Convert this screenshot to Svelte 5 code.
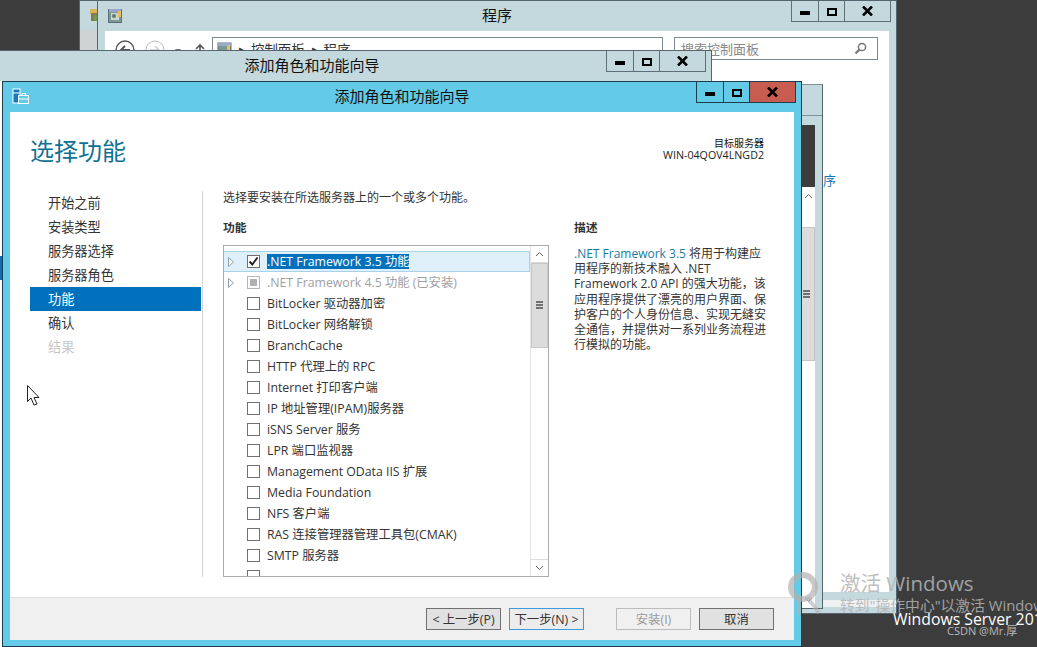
<script>
  const steps = [
    { label: "开始之前" },
    { label: "安装类型" },
    { label: "服务器选择" },
    { label: "服务器角色" },
    { label: "功能", active: true },
    { label: "确认" },
    { label: "结果", disabled: true }
  ];

  const features = [
    { label: ".NET Framework 3.5 功能", checked: true, tree: true, selected: true },
    { label: ".NET Framework 4.5 功能 (已安装)", partial: true, tree: true, muted: true },
    { label: "BitLocker 驱动器加密" },
    { label: "BitLocker 网络解锁" },
    { label: "BranchCache" },
    { label: "HTTP 代理上的 RPC" },
    { label: "Internet 打印客户端" },
    { label: "IP 地址管理(IPAM)服务器" },
    { label: "iSNS Server 服务" },
    { label: "LPR 端口监视器" },
    { label: "Management OData IIS 扩展" },
    { label: "Media Foundation" },
    { label: "NFS 客户端" },
    { label: "RAS 连接管理器管理工具包(CMAK)" },
    { label: "SMTP 服务器" },
    { label: "" }
  ];
</script>

{#snippet caption(danger)}
  <div class="caption">
    <span class="cap-btn cap-min"><i class="min-bar"></i></span>
    <span class="cap-btn cap-max"><i class="max-box"></i></span>
    <span class="cap-btn cap-close" class:danger>
      <svg width="13" height="10" viewBox="0 0 13 10"><path d="M2 0.5 L11 9.5 M11 0.5 L2 9.5" stroke="#000" stroke-width="2.6" fill="none" /></svg>
    </span>
  </div>
{/snippet}

<div class="desktop">
  <!-- window furthest back, only its left edge shows -->
  <div class="win back-edge">
    <svg class="edge-icon" width="9" height="14" viewBox="0 0 9 14">
      <rect x="1" y="1" width="8" height="5" fill="#d8b45a" />
      <rect x="2" y="5" width="7" height="8" fill="#8a7a4a" />
      <rect x="5" y="7" width="4" height="6" fill="#6f9a5a" />
    </svg>
    <div class="edge-body"></div>
  </div>

  <!-- 程序 -->
  <div class="win programs">
    <div class="titlebar inactive">
      <svg class="title-icon" width="16" height="16" viewBox="0 0 16 16">
        <rect x="1.5" y="1.5" width="13" height="13" fill="#7d9a92" stroke="#5d6f7a" />
        <rect x="2" y="1" width="12" height="3" fill="#9aa7c9" />
        <rect x="4" y="5" width="8" height="7" fill="#cfd6d2" />
        <circle cx="7" cy="8" r="2" fill="#5c7a66" />
        <rect x="11" y="3" width="3" height="6" fill="#e0c060" />
      </svg>
      <span class="title-text">程序</span>
      {@render caption(false)}
    </div>
    <div class="programs-body">
      <div class="toolbar">
        <svg width="94" height="22" viewBox="0 0 94 22">
          <circle cx="10" cy="11" r="9" fill="none" stroke="#555" stroke-width="1.4" />
          <path d="M15 11 H6 M10 7 L6 11 L10 15" fill="none" stroke="#555" stroke-width="2" />
          <circle cx="40" cy="11" r="9" fill="none" stroke="#bbb" />
          <path d="M35 11 H44 M40 7 L44 11 L40 15" fill="none" stroke="#ccc" stroke-width="1.5" />
          <path d="M60 10 L66 10 L63 14 Z" fill="#777" />
          <path d="M85 16 V6 M81 10 L85 6 L89 10" fill="none" stroke="#555" stroke-width="1.6" />
        </svg>
        <div class="address">
          <svg width="15" height="15" viewBox="0 0 15 15">
            <rect x="1" y="1" width="13" height="13" fill="#7d9a92" stroke="#5d6f7a" />
            <rect x="1" y="1" width="13" height="3" fill="#9aa7c9" />
            <rect x="10" y="3" width="3" height="6" fill="#e0c060" />
          </svg>
          <span class="crumb">▸</span><span>控制面板</span><span class="crumb">▸</span><span>程序</span>
        </div>
        <div class="search">
          <span>搜索控制面板</span>
          <svg width="13" height="13" viewBox="0 0 13 13">
            <circle cx="8" cy="5" r="3.6" fill="none" stroke="#777" stroke-width="1.5" />
            <path d="M5.4 7.6 L1.5 11.5" stroke="#777" stroke-width="2.2" />
          </svg>
        </div>
      </div>
      <span class="stray-link">序</span>
    </div>
    <div class="programs-status"></div>
  </div>

  <!-- window peeking out to the right of the dialog -->
  <div class="win peek">
    <div class="titlebar inactive peek-title">{@render caption(false)}</div>
    <div class="peek-body">
      <div class="peek-dark"></div>
      <div class="peek-scroll">
        <span class="peek-up">
          <svg width="9" height="6" viewBox="0 0 9 6"><path d="M1 5 L4.5 1.5 L8 5" fill="none" stroke="#666" /></svg>
        </span>
        <span class="peek-track"></span>
        <span class="peek-thumb"><i class="grip"></i></span>
        <span class="peek-rest"></span>
        <span class="peek-down">
          <svg width="9" height="6" viewBox="0 0 9 6"><path d="M1 1 L4.5 4.5 L8 1" fill="none" stroke="#666" /></svg>
        </span>
      </div>
    </div>
  </div>

  <!-- inactive copy of the wizard -->
  <div class="win wizard-back">
    <div class="titlebar inactive">
      <span></span>
      <span class="title-text">添加角色和功能向导</span>
      {@render caption(false)}
    </div>
    <div class="wizard-back-body">
      <span class="back-active"></span>
    </div>
  </div>

  <!-- active wizard -->
  <div class="win wizard">
    <div class="titlebar">
      <svg class="title-icon wizard-icon" width="17" height="16" viewBox="0 0 17 16">
        <rect x="0.5" y="0.5" width="8" height="15" fill="#fff" />
        <rect x="1.5" y="1.5" width="6" height="3" fill="#1a78b8" />
        <rect x="1.5" y="5.5" width="6" height="9" fill="#1a78b8" />
        <rect x="6.5" y="7.5" width="10" height="8" fill="#62cbe8" stroke="#fff" />
        <path d="M10 7.5 V5.5 H13.5 V7.5 M7 11 H16.5" fill="none" stroke="#fff" />
      </svg>
      <span class="title-text">添加角色和功能向导</span>
      {@render caption(true)}
    </div>

    <div class="wizard-body">
      <header class="head">
        <h1>选择功能</h1>
        <div class="target">
          <strong>目标服务器</strong>
          <span>WIN-04QOV4LNGD2</span>
        </div>
      </header>

      <div class="middle">
        <nav class="steps">
          {#each steps as step}
            <div class="step" class:active={step.active} class:disabled={step.disabled}>{step.label}</div>
          {/each}
        </nav>

        <section class="pane">
          <p class="intro">选择要安装在所选服务器上的一个或多个功能。</p>
          <div class="columns">
            <div class="features">
              <h2>功能</h2>
              <div class="listbox">
                <div class="rows">
                  {#each features as item}
                    <div class="row" class:selected={item.selected} class:muted={item.muted}>
                      <span class="tree">
                        {#if item.tree}
                          <svg width="6" height="10" viewBox="0 0 6 10"><path d="M0.5 0.5 L5.5 5 L0.5 9.5 Z" fill="#fff" stroke="#8fa0ad" /></svg>
                        {/if}
                      </span>
                      <span class="check" class:partial={item.partial}>
                        {#if item.checked}
                          <svg width="11" height="11" viewBox="0 0 11 11"><path d="M1.5 5.5 L4.3 8.5 L9.5 1.5" fill="none" stroke="#222" stroke-width="1.9" /></svg>
                        {/if}
                        {#if item.partial}<i></i>{/if}
                      </span>
                      <span class="label">{item.label}</span>
                    </div>
                  {/each}
                </div>
                <div class="scrollbar">
                  <span class="sb-btn">
                    <svg width="9" height="6" viewBox="0 0 9 6"><path d="M1 5 L4.5 1.5 L8 5" fill="none" stroke="#606060" /></svg>
                  </span>
                  <span class="sb-thumb"><i class="grip"></i></span>
                  <span class="sb-track"></span>
                  <span class="sb-btn sb-down">
                    <svg width="9" height="6" viewBox="0 0 9 6"><path d="M1 1 L4.5 4.5 L8 1" fill="none" stroke="#606060" /></svg>
                  </span>
                </div>
              </div>
            </div>

            <aside class="desc">
              <h2>描述</h2>
              <p>
                <span class="link">.NET Framework 3.5</span> 将用于构建应<br />
                用程序的新技术融入 .NET<br />
                Framework 2.0 API 的强大功能，该<br />
                应用程序提供了漂亮的用户界面、保<br />
                护客户的个人身份信息、实现无缝安<br />
                全通信，并提供对一系列业务流程进<br />
                行模拟的功能。
              </p>
            </aside>
          </div>
        </section>
      </div>

      <footer class="foot">
        <button class="btn">&lt; 上一步(P)</button>
        <button class="btn primary">下一步(N) &gt;</button>
        <button class="btn off">安装(I)</button>
        <button class="btn">取消</button>
      </footer>
    </div>
  </div>

  <!-- activation watermark and overlays -->
  <svg class="wm-key" width="34" height="46" viewBox="0 0 34 46">
    <circle cx="16" cy="16" r="12" fill="none" stroke="#b0b0b0" stroke-width="6" opacity="0.7" />
    <path d="M12 26 V44 M20 26 L32 42" stroke="#b0b0b0" stroke-width="4" fill="none" opacity="0.6" />
  </svg>
  <div class="activate">
    <div class="wm-title">激活 Windows</div>
    <div class="wm-sub">转到"操作中心"以激活 Windows。</div>
  </div>
  <div class="edition">Windows Server 2012 R2</div>
  <div class="credit">CSDN @Mr.厚</div>

  <svg class="pointer" width="13" height="21" viewBox="0 0 13 21">
    <path d="M0.5 0.5 V16.5 L4 13 L7 20 L10 19 L7 12.5 L12 12.5 Z" fill="#fff" stroke="#222" />
  </svg>
</div>

<style>
  :global(body) {
    margin: 0;
    background: #3c3c3c;
  }

  .desktop {
    position: relative;
    width: 1037px;
    height: 647px;
    overflow: hidden;
    background: #3c3c3c;
    font-family: "Open Sans", "Noto Sans CJK SC", sans-serif;
    font-size: 12px;
    color: #333;
  }

  .win {
    position: absolute;
    box-sizing: border-box;
    border: 1px solid #566670;
    background: #c4d9de;
    display: flex;
    flex-direction: column;
  }

  .back-edge {
    left: 79px;
    top: 0;
    width: 40px;
    height: 300px;
    padding-top: 7px;
  }
  .edge-icon {
    margin-left: 9px;
  }
  .edge-body {
    margin-top: 8px;
    flex: 1;
    background: #cfd3d3;
  }

  .programs {
    left: 97px;
    top: 0;
    width: 800px;
    height: 614px;
  }
  .programs-body {
    position: relative;
    margin: 0 7px;
    height: 561px;
    background: #fff;
    flex-shrink: 0;
  }
  .programs-status {
    margin: 8px 0 0 7px;
    height: 7px;
    background: #eef1f1;
  }
  .toolbar {
    display: flex;
    align-items: flex-start;
    gap: 3px;
    padding: 6px 11px 0 10px;
  }
  .toolbar svg:first-child {
    margin-top: 2px;
  }
  .address {
    box-sizing: border-box;
    width: 451px;
    height: 23px;
    border: 1px solid #7d8a8f;
    display: flex;
    align-items: center;
    gap: 7px;
    padding-left: 4px;
    font-size: 13.4px;
    color: #333;
  }
  .crumb {
    font-size: 9px;
  }
  .search {
    box-sizing: border-box;
    width: 204px;
    height: 23px;
    margin-left: 8px;
    border: 1px solid #7d8a8f;
    display: flex;
    align-items: center;
    justify-content: space-between;
    padding: 0 10px 0 6px;
    font-size: 13px;
    color: #8a8a8a;
  }
  .stray-link {
    position: absolute;
    left: 718px;
    top: 139px;
    font-size: 13px;
    color: #1478b4;
  }

  .peek {
    left: 22px;
    top: 84px;
    width: 801px;
    height: 525px;
    border-top-color: #7f9299;
  }
  .peek-title {
    height: 21px;
    min-height: 21px;
    display: flex;
    justify-content: flex-end;
    padding-right: 6px;
    border-bottom: 1px solid #7f9299;
  }
  .peek-body {
    margin: 9px 7px 0 0;
    flex: 1;
    display: flex;
    flex-direction: column;
    background: #fff;
  }
  .peek-dark {
    height: 62px;
    background: #3c3c3c;
  }
  .peek-scroll {
    flex: 1;
    display: flex;
    flex-direction: column;
    background: #fff;
  }
  .peek-up,
  .peek-down {
    height: 17px;
    flex-shrink: 0;
    display: flex;
    align-items: center;
    justify-content: flex-end;
    padding-right: 2px;
  }
  .peek-track {
    height: 23px;
    flex-shrink: 0;
  }
  .peek-thumb {
    height: 134px;
    flex-shrink: 0;
    background: #dcdcdc;
    border: 1px solid #c4c4c4;
    display: flex;
    align-items: center;
    justify-content: flex-end;
    padding-right: 4px;
    box-sizing: border-box;
  }
  .peek-rest {
    flex: 1;
  }

  .wizard-back {
    left: -88px;
    top: 50px;
    width: 800px;
    height: 620px;
  }
  .wizard-back-body {
    margin: 0 7px;
    flex: 1;
    background: #fff;
    display: flex;
    justify-content: flex-end;
  }
  .back-active {
    width: 100%;
    height: 24px;
    margin-top: 175px;
    background: #0f6fb3;
  }

  .wizard {
    left: 2px;
    top: 81px;
    width: 800px;
    height: 566px;
    background: #63cbe8;
    border-color: #1c3e4c;
  }

  .titlebar {
    height: 30px;
    flex-shrink: 0;
    display: grid;
    grid-template-columns: 1fr auto 1fr;
    align-items: start;
    padding: 0 5px;
  }
  .title-icon {
    margin: 7px 0 0 4px;
  }
  .wizard-icon {
    margin-top: 6px;
    margin-left: 4px;
  }
  .title-text {
    margin-top: 5px;
    font-size: 15px;
    line-height: 18px;
    color: #111;
  }

  .caption {
    display: flex;
    justify-content: flex-end;
    height: 21px;
  }
  .cap-btn {
    box-sizing: border-box;
    display: flex;
    justify-content: center;
    border: 1px solid #1c3e4c;
    border-top: 0;
    margin-left: -1px;
  }
  .inactive .cap-btn {
    border-color: #5d6f78;
  }
  .cap-min {
    width: 28px;
  }
  .cap-max {
    width: 27px;
  }
  .cap-close {
    width: 47px;
    align-items: center;
  }
  .cap-close.danger {
    background: #c75c50;
  }
  .min-bar {
    display: block;
    width: 10px;
    height: 4px;
    margin-top: 10px;
    background: #000;
  }
  .max-box {
    display: block;
    box-sizing: border-box;
    width: 10px;
    height: 8px;
    margin-top: 7px;
    border: 2px solid #000;
  }

  .wizard-body {
    margin: 0 7px;
    height: 528px;
    flex-shrink: 0;
    background: #fff;
    display: flex;
    flex-direction: column;
  }

  .head {
    height: 79px;
    flex-shrink: 0;
    display: flex;
    justify-content: space-between;
    padding: 0 30px 0 20px;
  }
  h1 {
    margin: 22px 0 0;
    font-size: 24px;
    line-height: 34px;
    font-weight: 400;
    color: #0f7193;
  }
  .target {
    margin-top: 25px;
    display: flex;
    flex-direction: column;
    align-items: flex-end;
    font-size: 10.7px;
    line-height: 12px;
    color: #222;
  }
  .target strong {
    font-size: 10px;
    font-weight: 400;
    color: #111;
  }

  .middle {
    flex: 1;
    display: flex;
    padding-left: 20px;
    min-height: 0;
  }
  .steps {
    width: 171px;
    flex-shrink: 0;
  }
  .step {
    height: 24px;
    line-height: 24px;
    padding-left: 18px;
    font-size: 13.2px;
    color: #333;
  }
  .step.active {
    background: #0071bc;
    color: #fff;
  }
  .step.disabled {
    color: #c8c8c8;
  }

  .pane {
    margin-left: 1px;
    height: 386px;
    border-left: 1px solid #d5d5d5;
    padding-left: 20px;
  }
  .intro {
    margin: 0;
    font-size: 12px;
    line-height: 13px;
    white-space: nowrap;
  }
  .columns {
    display: flex;
    gap: 25px;
    margin-top: 15px;
  }
  .features {
    width: 326px;
    flex-shrink: 0;
  }
  h2 {
    margin: 0;
    font-size: 11.8px;
    line-height: 16px;
    font-weight: 700;
    color: #333;
  }

  .listbox {
    box-sizing: border-box;
    margin-top: 10px;
    height: 332px;
    border: 1px solid #ababab;
    display: flex;
  }
  .rows {
    flex: 1;
    min-width: 0;
    padding-top: 5px;
    overflow: hidden;
  }
  .row {
    box-sizing: border-box;
    height: 21px;
    display: flex;
    align-items: center;
    border: 1px solid transparent;
    border-left: 0;
    font-size: 12.3px;
    white-space: nowrap;
  }
  .row.selected {
    background: #dff0fa;
    border-color: #a6d2ea;
  }
  .row.muted .label {
    color: #a0a0a0;
  }
  .tree {
    width: 23px;
    padding-left: 4px;
    box-sizing: border-box;
    flex-shrink: 0;
    display: flex;
    align-items: center;
  }
  .check {
    box-sizing: border-box;
    width: 13px;
    height: 13px;
    flex-shrink: 0;
    margin-right: 7px;
    border: 1px solid #707070;
    background: #fff;
    display: flex;
    align-items: center;
    justify-content: center;
  }
  .check.partial {
    border-color: #b5b5b5;
  }
  .check.partial i {
    width: 7px;
    height: 7px;
    background: #b0b0b0;
  }
  .label {
    line-height: 15px;
  }
  .row.selected .label {
    background: #0071bc;
    color: #fff;
  }

  .scrollbar {
    width: 17px;
    flex-shrink: 0;
    border-left: 1px solid #e4e4e4;
    display: flex;
    flex-direction: column;
  }
  .sb-btn {
    height: 17px;
    flex-shrink: 0;
    display: flex;
    align-items: center;
    justify-content: center;
    border-bottom: 1px solid #dcdcdc;
    box-sizing: border-box;
  }
  .sb-down {
    border-bottom: 0;
    border-top: 1px solid #dcdcdc;
  }
  .sb-thumb {
    height: 85px;
    flex-shrink: 0;
    background: #dcdcdc;
    border: 1px solid #c8c8c8;
    box-sizing: border-box;
    display: flex;
    align-items: center;
    justify-content: center;
  }
  .sb-track {
    flex: 1;
  }
  .grip {
    display: block;
    width: 7px;
    height: 9px;
    flex-shrink: 0;
    background: repeating-linear-gradient(#707070 0 2px, transparent 2px 3px);
  }

  .desc {
    width: 196px;
    flex-shrink: 0;
  }
  .desc p {
    margin: 11px 0 0;
    font-size: 12px;
    line-height: 15.2px;
    white-space: nowrap;
    color: #333;
  }
  .link {
    color: #1a7a9e;
  }

  .foot {
    height: 43px;
    flex-shrink: 0;
    box-sizing: border-box;
    margin-top: auto;
    border-top: 1px solid #dfdfdf;
    background: #f0f0f0;
    display: flex;
    justify-content: flex-end;
    align-items: flex-start;
    gap: 8px;
    padding: 10px 20px 0 0;
  }
  .btn {
    box-sizing: border-box;
    width: 75px;
    height: 22px;
    padding: 0;
    border: 1px solid #707070;
    background: #e1e1e1;
    font: inherit;
    font-size: 12.4px;
    color: #333;
  }
  .btn.primary {
    border-color: #3d9be0;
    background: #ececec;
    margin-right: 24px;
  }
  .btn.off {
    border-color: #bcbcbc;
    background: #f0f0f0;
    color: #9a9a9a;
  }

  .wm-key {
    position: absolute;
    left: 787px;
    top: 571px;
  }
  .activate {
    position: absolute;
    left: 840px;
    top: 570px;
    white-space: nowrap;
    color: #b4b4b4;
    opacity: 0.85;
  }
  .wm-title {
    font-size: 20.5px;
    line-height: 26px;
  }
  .wm-sub {
    margin-top: -1px;
    font-size: 14.8px;
    line-height: 20px;
  }
  .edition {
    position: absolute;
    left: 893px;
    top: 611px;
    font-size: 15.8px;
    line-height: 17px;
    color: #fff;
    white-space: nowrap;
  }
  .credit {
    position: absolute;
    left: 947px;
    top: 624px;
    font-size: 11px;
    line-height: 14px;
    color: #b8b8b8;
    white-space: nowrap;
  }
  .pointer {
    position: absolute;
    left: 27px;
    top: 385px;
  }
</style>
